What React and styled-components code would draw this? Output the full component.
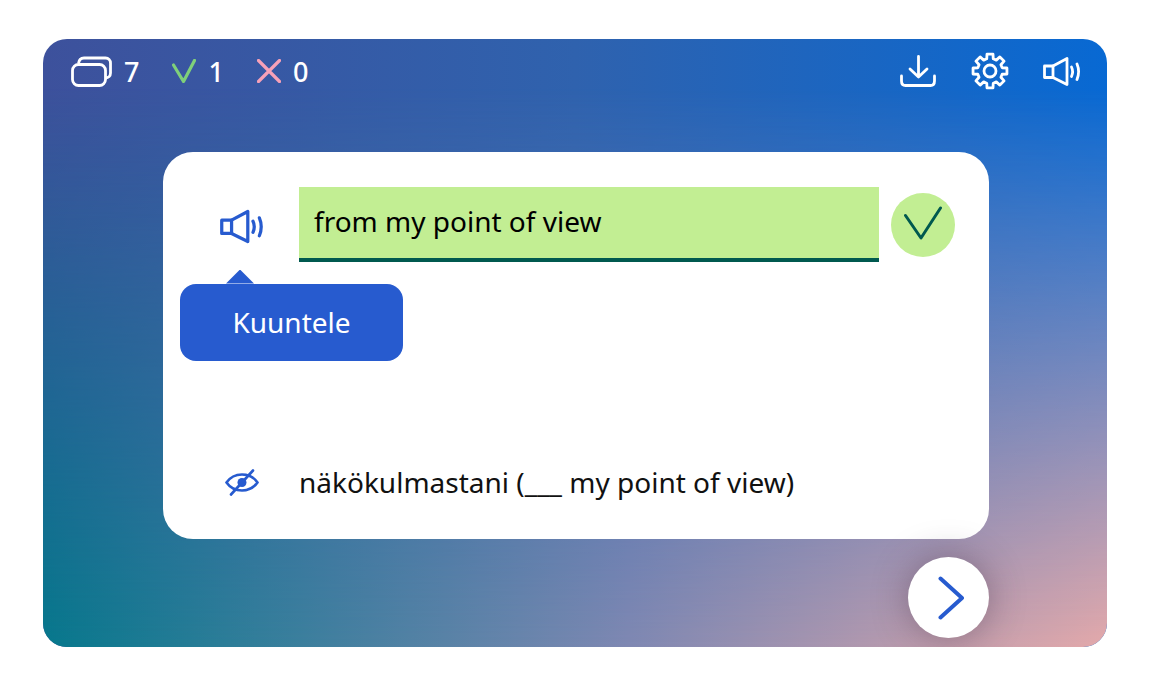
import React from 'react';
import styled, { createGlobalStyle } from 'styled-components';

const COLORS = {
  blue: '#275bcf',
  green: '#c2ee93',
  darkGreen: '#00594f',
  white: '#ffffff',
};

const GlobalStyle = createGlobalStyle`
  html, body {
    margin: 0;
    padding: 0;
    background: #fff;
    font-family: "Noto Sans", "Open Sans", sans-serif;
  }
`;

// 8 chunky teeth around the centre of a 38x38 box
const gearPath = () => {
  const pt = (r, deg) => {
    const a = ((deg - 90) * Math.PI) / 180;
    return `${(19 + r * Math.cos(a)).toFixed(2)} ${(19 + r * Math.sin(a)).toFixed(2)}`;
  };
  let d = '';
  for (let i = 0; i < 8; i++) {
    const c = i * 45;
    d += `${i === 0 ? 'M' : 'L'}${pt(12.6, c - 15)}L${pt(17.2, c - 10)}L${pt(17.2, c + 10)}L${pt(12.6, c + 15)}`;
  }
  return d + 'Z';
};

const Speaker = ({ color, width, height }) => (
  <svg width={width} height={height} viewBox="0 0 38 29" fill="none" stroke={color} strokeWidth="2.8" strokeLinejoin="round" strokeLinecap="round">
    <path d="M1.5 9h8.5v11.5H1.5z" />
    <path d="M10 9L24 1.5v26L10 20.5" />
    <path d="M28.5 10q2.2 4.5 0 9.5" />
    <path d="M34 7q3.2 7.5 0 15.5" />
  </svg>
);

const App = () => {
  return (
    <Page>
      <GlobalStyle />
      <Frame>
        <TopBar>
          <Stats>
            <Stat>
              <svg width="41" height="31" viewBox="0 0 41 31" fill="none" stroke="#fff" strokeWidth="2.8">
                <rect x="1.5" y="8.5" width="33" height="21" rx="6" />
                <path d="M7.5 7.5C8 3.5 10 2 13 2h21.5c3 0 5 2 5 5v10c0 3-2 5-5 5" />
              </svg>
              <Count>7</Count>
            </Stat>
            <Stat>
              <svg width="24" height="24" viewBox="0 0 24 24" fill="none" stroke="#7fd07a" strokeWidth="3.2" strokeLinecap="round" strokeLinejoin="round">
                <path d="M1.5 6l10 16.5L22.5 1.5" />
              </svg>
              <Count>1</Count>
            </Stat>
            <Stat>
              <svg width="24" height="24" viewBox="0 0 24 24" fill="none" stroke="#f7a1b8" strokeWidth="3.2" strokeLinecap="round">
                <path d="M1.5 1.5l21 21M22.5 1.5l-21 21" />
              </svg>
              <Count>0</Count>
            </Stat>
          </Stats>
          <Tools>
            <svg width="37" height="32" viewBox="0 0 37 32" fill="none" stroke="#fff" strokeWidth="2.8" strokeLinecap="round" strokeLinejoin="round">
              <path d="M18.5 1.5v20M10 14l8.5 8L27 14" />
              <path d="M1.5 21v5c0 3 1.5 4.5 4 4.5h25c2.5 0 4-1.5 4-4.5v-5" />
            </svg>
            <svg width="38" height="38" viewBox="0 0 38 38" fill="none" stroke="#fff" strokeWidth="2.8" strokeLinejoin="round">
              <path d={gearPath()} />
              <circle cx="19" cy="19" r="6" />
            </svg>
            <Speaker color="#fff" width={38} height={29} />
          </Tools>
        </TopBar>

        <Card>
          <AnswerRow>
            <IconSlot>
              <ListenIcon>
                <Speaker color={COLORS.blue} width={44} height={35} />
              </ListenIcon>
              <Tooltip>Kuuntele</Tooltip>
            </IconSlot>
            <AnswerField>from my point of view</AnswerField>
            <CheckBadge>
              <svg width="38" height="34" viewBox="0 0 38 34" fill="none" stroke={COLORS.darkGreen} strokeWidth="3" strokeLinecap="round" strokeLinejoin="round">
                <path d="M1.5 9.5L17 32 36.5 2" />
              </svg>
            </CheckBadge>
          </AnswerRow>
          <HintRow>
            <IconSlot>
              <svg width="34" height="27" viewBox="0 0 34 27" fill="none" stroke={COLORS.blue} strokeWidth="2.6" strokeLinecap="round">
                <path d="M1.5 13.5C5 8.5 10.5 5.5 17 5.5s12 3 15.5 8c-3.5 5-9 8-15.5 8s-12-3-15.5-8z" />
                <circle cx="17" cy="13.5" r="4.5" fill={COLORS.blue} stroke="none" />
                <path d="M28 1.5L6 25.5" />
              </svg>
            </IconSlot>
            <HintText>näkökulmastani (___ my point of view)</HintText>
          </HintRow>
        </Card>

        <NextRow>
          <NextButton>
            <svg width="26" height="44" viewBox="0 0 26 44" fill="none" stroke={COLORS.blue} strokeWidth="4" strokeLinecap="round" strokeLinejoin="round">
              <path d="M2.5 2.5L24 22 2.5 41.5" />
            </svg>
          </NextButton>
        </NextRow>
      </Frame>
    </Page>
  );
};

const Page = styled.div`
  width: 1150px;
  height: 697px;
  padding: 39px 43px 50px;
  box-sizing: border-box;
  overflow: hidden;
`;

// bilinear corner gradient: the bottom colours fade in over the top ones
const Frame = styled.main`
  position: relative;
  isolation: isolate;
  height: 608px;
  border-radius: 24px;
  overflow: hidden;
  background: linear-gradient(90deg, #3d519c 0%, #2f62ae 50%, #0869d3 100%);

  &::before {
    content: '';
    position: absolute;
    inset: 0;
    z-index: -1;
    background: linear-gradient(90deg, #06788c 0%, #7f88b2 55%, #e4a9aa 100%);
    mask-image: linear-gradient(180deg, transparent 8%, #000 100%);
  }
`;

const TopBar = styled.header`
  display: flex;
  justify-content: space-between;
  align-items: center;
  height: 64px;
  padding: 0 26px 0 28px;
`;

const Stats = styled.div`
  display: flex;
  align-items: center;
  gap: 33px;
`;

const Stat = styled.div`
  display: flex;
  align-items: center;
  gap: 12px;
`;

const Count = styled.span`
  font-size: 27px;
  font-weight: 500;
  line-height: 1;
  color: ${COLORS.white};
`;

const Tools = styled.div`
  display: flex;
  align-items: center;
  gap: 34px;
`;

const Card = styled.section`
  display: flex;
  flex-direction: column;
  justify-content: space-between;
  box-sizing: border-box;
  width: 826px;
  height: 387px;
  margin: 49px 0 0 120px;
  padding: 35px 34px 36px 0;
  border-radius: 30px;
  background: ${COLORS.white};
`;

const AnswerRow = styled.div`
  display: flex;
  align-items: center;
`;

const HintRow = styled.div`
  display: flex;
  align-items: center;
  height: 42px;
`;

const IconSlot = styled.div`
  position: relative;
  flex: 0 0 136px;
  box-sizing: border-box;
  padding-left: 22px;
  display: flex;
  justify-content: center;
`;

const ListenIcon = styled.div`
  display: flex;
  padding-top: 3px;
`;

const Tooltip = styled.div`
  position: absolute;
  top: 78px;
  left: 17px;
  width: 223px;
  height: 77px;
  display: flex;
  align-items: center;
  justify-content: center;
  border-radius: 16px;
  background: ${COLORS.blue};
  color: ${COLORS.white};
  font-size: 28px;

  &::before {
    content: '';
    position: absolute;
    top: -14px;
    left: 46px;
    width: 28px;
    height: 14px;
    background: ${COLORS.blue};
    clip-path: polygon(50% 0, 100% 100%, 0 100%);
  }
`;

const AnswerField = styled.div`
  flex: 0 0 580px;
  box-sizing: border-box;
  height: 75px;
  padding: 0 15px 4px;
  display: flex;
  align-items: center;
  background: ${COLORS.green};
  border-bottom: 4px solid ${COLORS.darkGreen};
  color: #000;
  font-size: 28px;
`;

const CheckBadge = styled.div`
  box-sizing: border-box;
  width: 64px;
  height: 64px;
  margin-left: 12px;
  padding-bottom: 4px;
  border-radius: 50%;
  display: flex;
  align-items: center;
  justify-content: center;
  background: ${COLORS.green};
`;

const HintText = styled.span`
  font-size: 28px;
  color: #111;
`;

const NextRow = styled.div`
  display: flex;
  justify-content: flex-end;
  padding: 18px 118px 0 0;
`;

const NextButton = styled.button`
  width: 81px;
  height: 81px;
  padding: 0 0 0 4px;
  border: 0;
  border-radius: 50%;
  display: flex;
  align-items: center;
  justify-content: center;
  background: ${COLORS.white};
  box-shadow: 0 0 36px rgba(60, 40, 60, 0.4);
`;

export default App;
